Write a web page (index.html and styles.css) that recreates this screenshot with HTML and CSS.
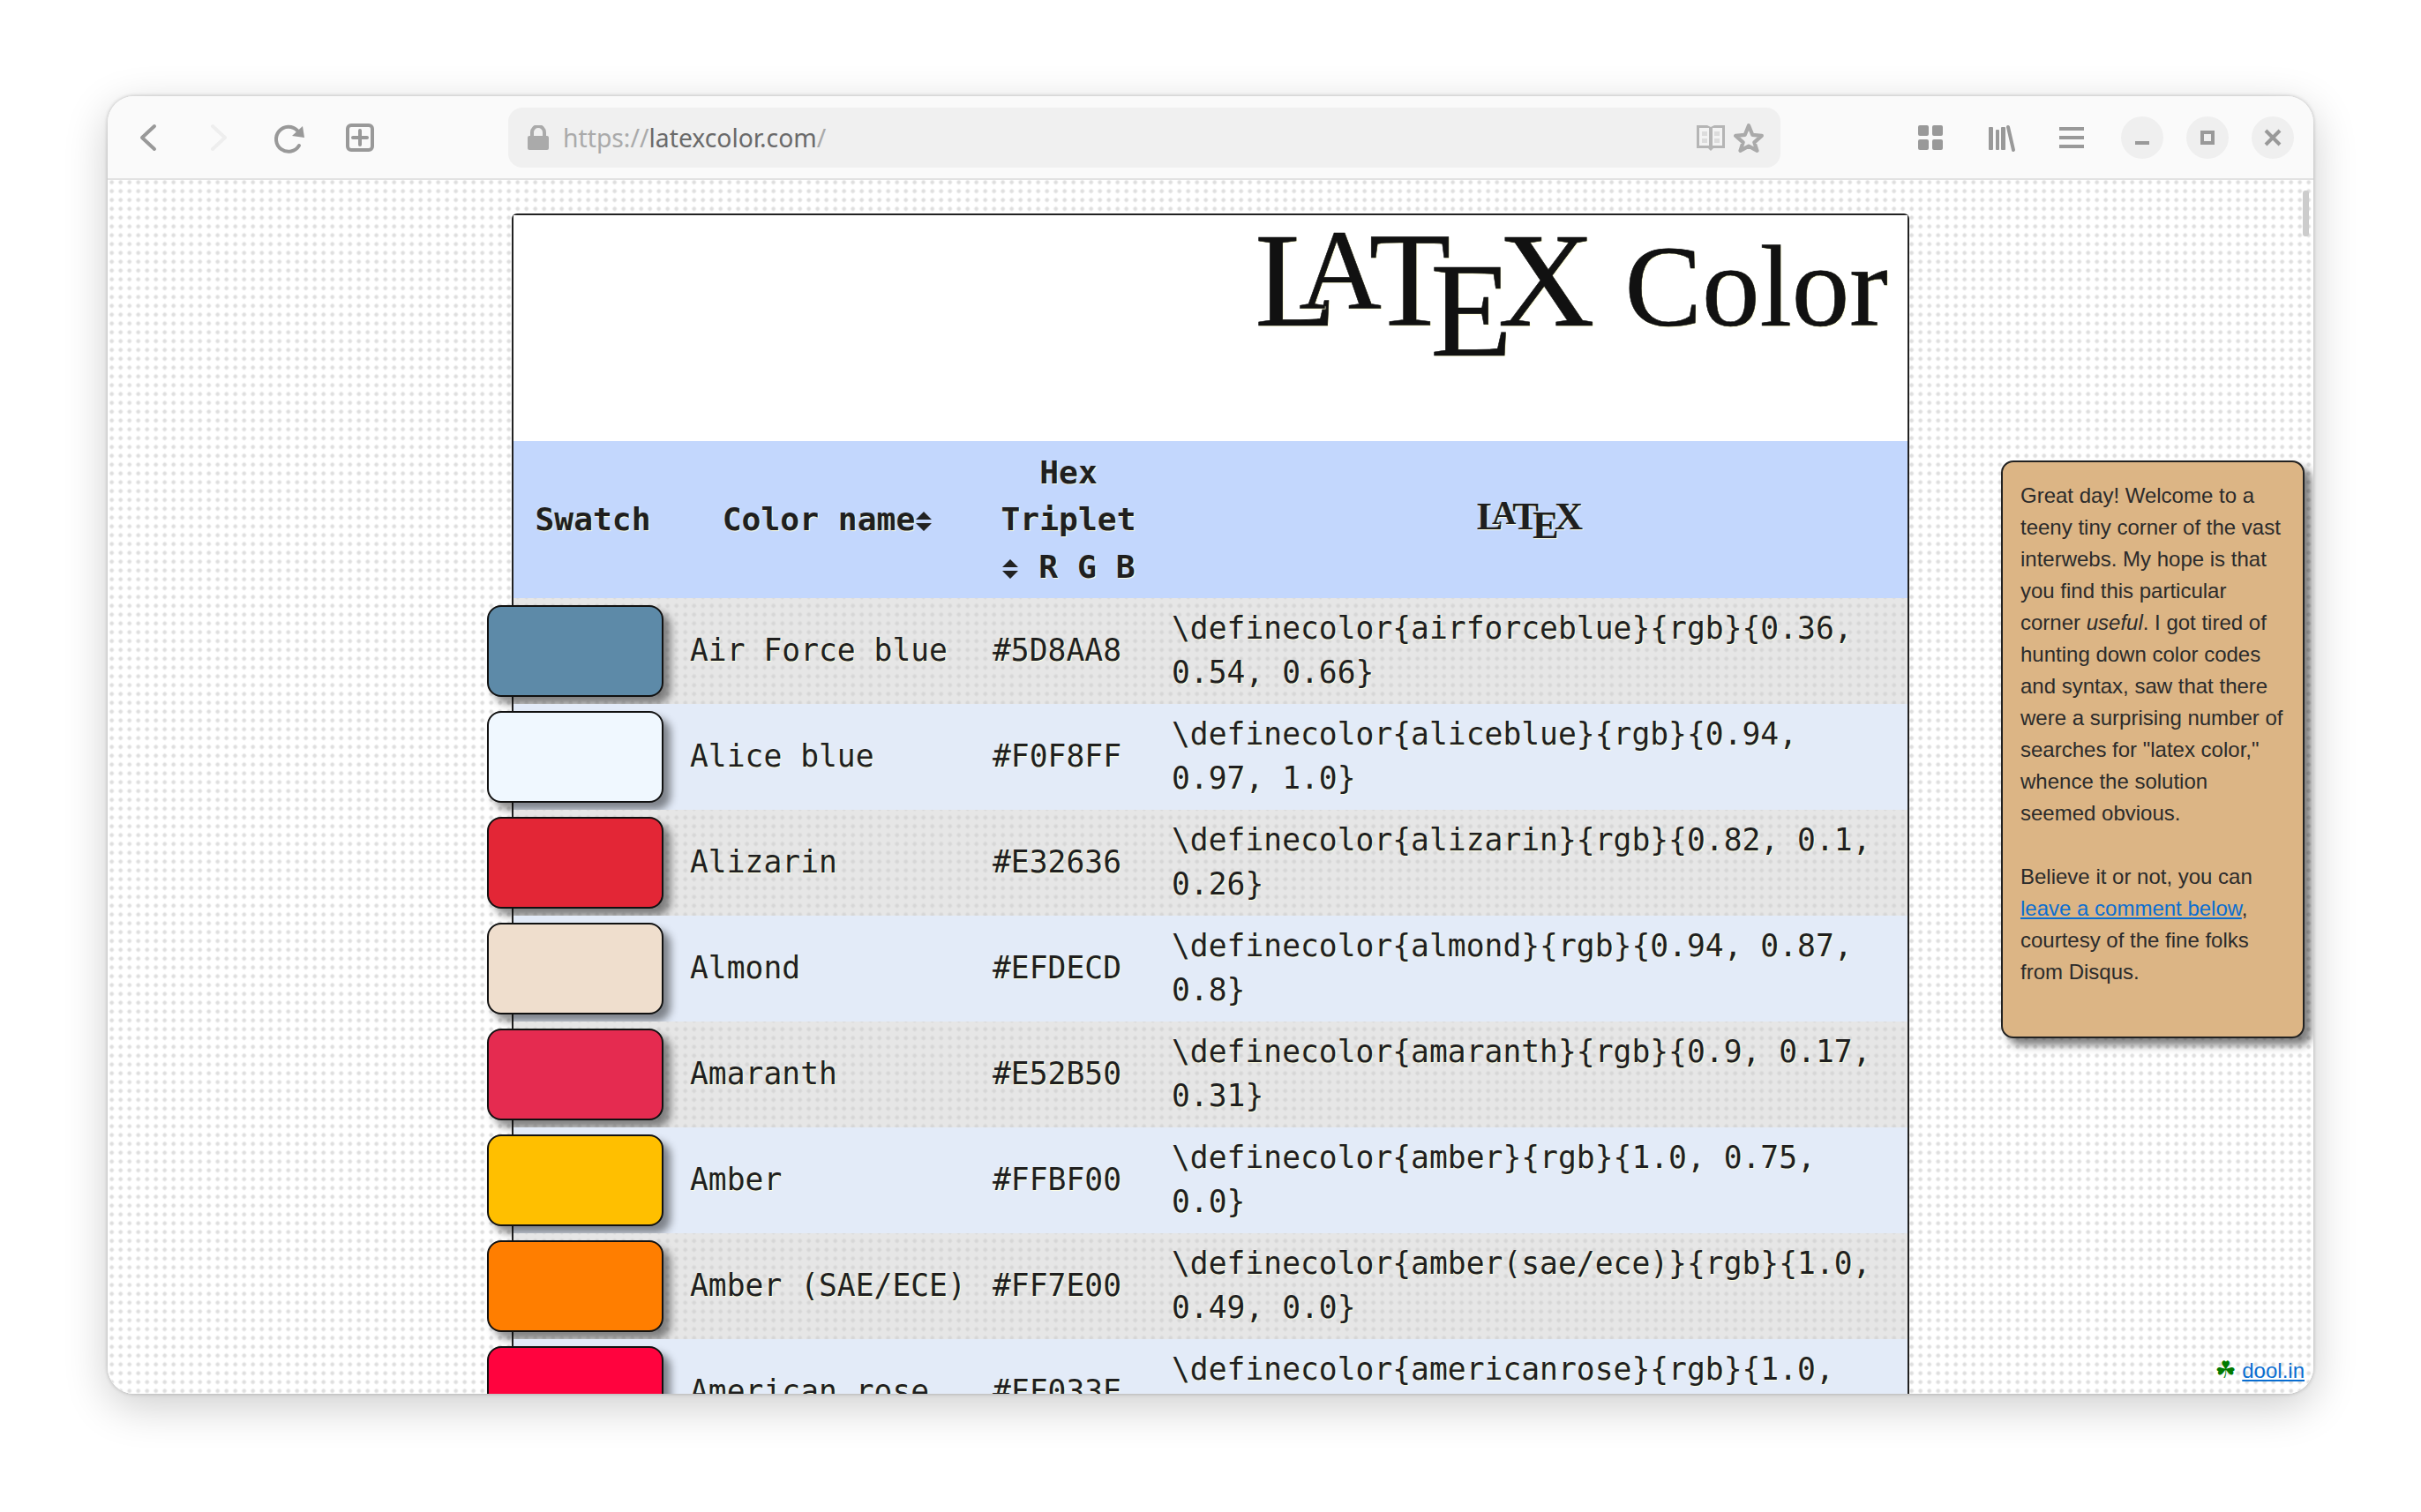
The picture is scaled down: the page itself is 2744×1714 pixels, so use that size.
FILE: index.html
```html
<!DOCTYPE html>
<html>
<head>
  <title>LaTeX Color</title>
  <link rel="stylesheet" href="styles.css">
</head>
<body>
  <div class="window">

    <!-- barra del navegador -->
    <div class="toolbar">
      <svg class="icon" viewBox="0 0 32 32"><path class="stroke" d="M23 3 9 16l14 13"/></svg>
      <svg class="icon" viewBox="0 0 32 32"><path class="stroke faint" d="M9 3l14 13L9 29"/></svg>
      <svg class="icon" viewBox="0 0 32 32"><path class="stroke" d="M27 25A14 14 0 1 1 25 8"/><path class="fill" d="M31 3l2 13-14-2z"/></svg>
      <svg class="icon" viewBox="0 0 32 32"><rect class="stroke" x="2" y="2" width="28" height="28" rx="4"/><path class="stroke" d="M16 8v16M8 16h16"/></svg>

      <div class="urlbar">
        <svg class="lock" viewBox="0 0 24 28"><path class="lock-shackle" d="M5 14V8a7 7 0 0 1 14 0v6"/><rect class="lock-body" y="12" width="24" height="16" rx="2"/></svg>
        <div class="url"><span class="url-dim">https://</span>latexcolor.com<span class="url-dim">/</span></div>
        <svg class="reader" viewBox="0 0 32 30"><path class="reader-book" d="M0 1h12l4 2 4-2h12v26H19l-3 3-3-3H0z"/><path class="reader-page" d="M3 4h11v20H3zM18 4h11v20H18z"/><path class="reader-lines" d="M6 8h6v5H6zM6 16h6v5H6zM20 8h6v5h-6zM20 16h6v5h-6z"/></svg>
        <svg class="star" viewBox="0 0 34 32"><path class="star-line" d="M17 3l4 10 10 1-8 7 3 9-9-5-9 5 3-9-8-7 10-1z"/></svg>
      </div>

      <svg class="icon icon-grid" viewBox="0 0 32 32"><rect class="fill" x="2" y="2" width="12" height="12" rx="2"/><rect class="fill" x="18" y="2" width="12" height="12" rx="2"/><rect class="fill" x="2" y="18" width="12" height="12" rx="2"/><rect class="fill" x="18" y="18" width="12" height="12" rx="2"/></svg>
      <svg class="icon" viewBox="0 0 32 32"><rect class="fill" x="2" y="4" width="5" height="26" rx="1"/><rect class="fill" x="10" y="7" width="4" height="23" rx="1"/><rect class="fill" x="16" y="4" width="5" height="26" rx="1"/><path class="stroke" d="M24 4l6 26"/></svg>
      <svg class="icon" viewBox="0 0 32 32"><path class="fill" d="M2 4h28v4H2zM2 14h28v4H2zM2 24h28v4H2z"/></svg>

      <div class="winbtn winbtn-first"><svg viewBox="0 0 48 48"><rect class="fill" x="16" y="28" width="16" height="4"/></svg></div>
      <div class="winbtn"><svg viewBox="0 0 48 48"><rect class="stroke-sharp" x="18" y="18" width="12" height="12"/></svg></div>
      <div class="winbtn"><svg viewBox="0 0 48 48"><path class="stroke-sharp" d="M16 16l16 16M32 16L16 32"/></svg></div>
    </div>

    <!-- contenido de la pagina -->
    <div class="content">
      <div class="page">
        <div class="title">
          <span class="latex"><span class="la">A</span><span class="lt">T</span><span class="le">E</span><span class="lx">X</span></span>
          <span class="title-color">Color</span>
        </div>

        <table class="colors">
          <thead>
            <tr>
              <th class="col-swatch">Swatch</th>
              <th class="col-name">Color name<svg class="sort" viewBox="0 0 20 22"><path d="M10 0l9 9H1zM10 22l-9-9h18z"/></svg></th>
              <th class="col-hex">Hex<br>Triplet<br><svg class="sort" viewBox="0 0 20 22"><path d="M10 0l9 9H1zM10 22l-9-9h18z"/></svg>&nbsp;R G B</th>
              <th class="col-tex"><span class="latex latex-small"><span class="la">A</span><span class="lt">T</span><span class="le">E</span><span class="lx">X</span></span></th>
            </tr>
          </thead>
          <tbody>
            <tr><td><div class="swatch swatch-airforce"></div></td><td>Air Force blue</td><td>#5D8AA8</td><td>\definecolor{airforceblue}{rgb}{0.36, 0.54, 0.66}</td></tr>
            <tr><td><div class="swatch swatch-alice"></div></td><td>Alice blue</td><td>#F0F8FF</td><td>\definecolor{aliceblue}{rgb}{0.94, 0.97, 1.0}</td></tr>
            <tr><td><div class="swatch swatch-alizarin"></div></td><td>Alizarin</td><td>#E32636</td><td>\definecolor{alizarin}{rgb}{0.82, 0.1, 0.26}</td></tr>
            <tr><td><div class="swatch swatch-almond"></div></td><td>Almond</td><td>#EFDECD</td><td>\definecolor{almond}{rgb}{0.94, 0.87, 0.8}</td></tr>
            <tr><td><div class="swatch swatch-amaranth"></div></td><td>Amaranth</td><td>#E52B50</td><td>\definecolor{amaranth}{rgb}{0.9, 0.17, 0.31}</td></tr>
            <tr><td><div class="swatch swatch-amber"></div></td><td>Amber</td><td>#FFBF00</td><td>\definecolor{amber}{rgb}{1.0, 0.75, 0.0}</td></tr>
            <tr><td><div class="swatch swatch-sae"></div></td><td>Amber (SAE/ECE)</td><td>#FF7E00</td><td>\definecolor{amber(sae/ece)}{rgb}{1.0, 0.49, 0.0}</td></tr>
            <tr><td><div class="swatch swatch-rose"></div></td><td>American rose</td><td>#FF033E</td><td>\definecolor{americanrose}{rgb}{1.0, 0.01, 0.24}</td></tr>
          </tbody>
        </table>
      </div>

      <!-- nota flotante -->
      <div class="note">
        Great day! Welcome to a teeny tiny corner of the vast interwebs. My hope is that you find this particular corner <em>useful</em>. I got tired of hunting down color codes and syntax, saw that there were a surprising number of searches for "latex color," whence the solution seemed obvious.<br><br>
        Believe it or not, you can <a href="#">leave a comment below</a>, courtesy of the fine folks from Disqus.
      </div>

      <div class="credit"><span class="shamrock">☘</span> <a href="#">dool.in</a></div>
      <div class="scrollbar"></div>
    </div>
  </div>
</body>
</html>
```

FILE: styles.css
```css
html, body {
  margin: 0;
  padding: 0;
  height: 1714px;
  overflow: hidden;
  background-color: #fff;
}

body {
  padding: 109px 122px 0;
  box-sizing: border-box;
}

.window {
  height: 1471px;
  border-radius: 30px;
  overflow: hidden;
  background-color: #fff;
  box-shadow: 0 14px 50px rgba(0, 0, 0, 0.2), 0 0 4px rgba(0, 0, 0, 0.25);
}

/* barra */
.toolbar {
  display: flex;
  align-items: center;
  box-sizing: border-box;
  height: 95px;
  padding: 0 0 0 30px;
  gap: 48px;
  background-color: #fafafa;
  border-bottom: 2px solid #e2e2e2;
}

.icon {
  width: 32px;
  height: 32px;
  flex: none;
  overflow: visible;
}

.stroke, .stroke-sharp {
  fill: none;
  stroke: #999;
  stroke-width: 4;
}

.stroke {
  stroke-linecap: round;
  stroke-linejoin: round;
}

.faint {
  stroke: #eee;
}

.fill {
  fill: #999;
}

.urlbar {
  display: flex;
  align-items: center;
  box-sizing: border-box;
  width: 1442px;
  height: 68px;
  margin-left: 104px;
  margin-right: 106px;
  padding: 0 18px 0 22px;
  border-radius: 16px;
  background-color: #f0f0f0;
  flex: none;
}

.lock {
  width: 24px;
  height: 28px;
  flex: none;
}

.lock-shackle {
  fill: none;
  stroke: #aaa;
  stroke-width: 4;
}

.lock-body {
  fill: #aaa;
}

.url {
  flex: 1;
  margin-left: 16px;
  font-family: "Noto Sans", sans-serif;
  font-size: 28.3px;
  color: #6a6a6a;
}

.url-dim {
  color: #aaa;
}

.reader {
  width: 32px;
  height: 30px;
  flex: none;
}

.reader-book {
  fill: #b5b5b5;
}

.reader-page {
  fill: #f3f3f3;
}

.reader-lines {
  fill: #dcdcdc;
}

.star {
  width: 36px;
  height: 34px;
  margin-left: 9px;
  flex: none;
}

.star-line {
  fill: none;
  stroke: #aaa;
  stroke-width: 4;
  stroke-linejoin: round;
}

.winbtn {
  width: 48px;
  height: 48px;
  margin-left: -22px;
  border-radius: 50%;
  background-color: #efefef;
  flex: none;
}

.winbtn-first {
  margin-left: -8px;
}

.winbtn svg {
  display: block;
  width: 48px;
  height: 48px;
}

/* pagina */
.content {
  position: relative;
  height: 1376px;
  overflow: hidden;
  background-color: #fff;
  background-image: radial-gradient(circle at center, #dedede 1.5px, transparent 3px);
  background-size: 10px 10px;
  background-position: -0.33px -2.33px;
}

.page {
  box-sizing: border-box;
  width: 1584px;
  margin: 38px 0 0 458px;
  border: 2px solid #222;
  border-bottom: none;
  border-radius: 6px 6px 0 0;
}

.title {
  display: flex;
  justify-content: flex-end;
  align-items: baseline;
  box-sizing: border-box;
  height: 256px;
  padding-right: 22px;
  background-color: #fff;
  font-family: "Liberation Serif", serif;
  color: #111;
  text-shadow: 1px 1px 1px #ffffd8;
  -webkit-text-stroke: 0.6px #111;
}

.latex {
  font-family: "Liberation Serif", serif;
  font-size: 152px;
  line-height: 1;
  white-space: nowrap;
  margin-top: -2px;
}

.latex::before {
  content: "L";
}

.la {
  font-size: 0.853em;
  vertical-align: 0.148em;
  margin-left: -0.33em;
  margin-right: -0.11em;
}

.le {
  vertical-align: -0.22em;
  margin-left: -0.153em;
  margin-right: -0.107em;
}

.title-color {
  font-size: 131px;
  line-height: 1;
  margin-left: 34px;
}

.latex-small {
  font-size: 44.5px;
}

.colors {
  width: 1580px;
  table-layout: fixed;
  border-collapse: collapse;
  font-family: "DejaVu Sans Mono", monospace;
  font-size: 34.65px;
  color: #1f1f1f;
  text-shadow: 1px 1px 1px #ffffe0;
}

.colors th {
  height: 178px;
  padding: 0;
  font-size: 36.3px;
  line-height: 53.5px;
  background-color: #c3d7fd;
  font-weight: bold;
  text-align: center;
}

.col-swatch {
  width: 180px;
}

.colors .col-name {
  width: 343px;
  padding-left: 9px;
  box-sizing: border-box;
}

.col-hex {
  width: 212px;
}

.colors .col-tex {
  padding-right: 11px;
}

.sort {
  width: 20px;
  height: 22px;
  vertical-align: -1px;
  fill: #222;
}

.colors td {
  height: 120px;
  padding: 0 0 2px 20px;
  box-sizing: border-box;
  line-height: 50px;
}

.colors td:first-child {
  padding: 0;
}

.colors td:last-child {
  padding: 0 20px 2px 11px;
}

.colors tbody tr:nth-child(odd) {
  background-color: #e6e6e6;
  background-image: radial-gradient(circle at center, #d6d6d6 1.5px, transparent 3px);
  background-size: 10px 10px;
  background-position: -0.33px 3.67px;
}

.colors tbody tr:nth-child(even) {
  background-color: #e3ebf8;
}

.swatch {
  box-sizing: border-box;
  width: 200px;
  height: 104px;
  margin-left: -30px;
  border: 2px solid #111;
  border-radius: 16px;
  box-shadow: 8px 8px 10px rgba(0, 0, 0, 0.45);
}

.swatch-airforce { background-color: #5d8aa8; }
.swatch-alice { background-color: #f0f8ff; }
.swatch-alizarin { background-color: #e32636; }
.swatch-almond { background-color: #efdecd; }
.swatch-amaranth { background-color: #e52b50; }
.swatch-amber { background-color: #ffbf00; }
.swatch-sae { background-color: #ff7e00; }
.swatch-rose { background-color: #ff033e; }

/* nota */
.note {
  position: absolute;
  top: 318px;
  left: 2146px;
  box-sizing: border-box;
  width: 344px;
  height: 655px;
  padding: 20px 18px 0 20px;
  border: 2px solid #222;
  border-radius: 14px;
  background-color: #dcb585;
  box-shadow: 8px 8px 10px rgba(0, 0, 0, 0.5);
  font-family: "Liberation Sans", sans-serif;
  font-size: 24px;
  line-height: 36px;
  color: #2b2b2b;
}

.note a, .credit a {
  color: #0a6ed1;
}

.credit {
  position: absolute;
  right: 10px;
  bottom: 12px;
  font-family: "Liberation Sans", sans-serif;
  font-size: 24px;
}

.shamrock {
  font-family: "DejaVu Sans", sans-serif;
  font-size: 27px;
  line-height: 24px;
  color: #007a00;
}

.scrollbar {
  position: absolute;
  top: 12px;
  right: 5px;
  width: 7px;
  height: 52px;
  border-radius: 3px;
  background-color: #ccc;
}
```
